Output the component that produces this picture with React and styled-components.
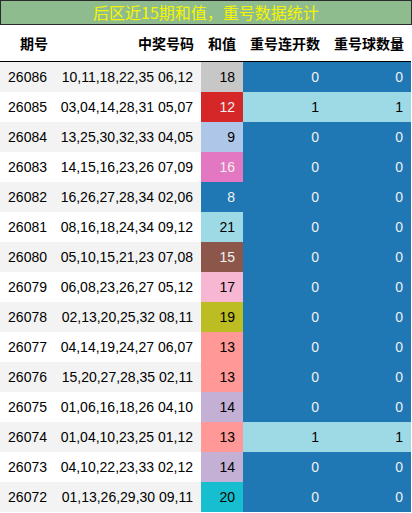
import React from "react";
import styled, { createGlobalStyle } from "styled-components";

const GlobalStyle = createGlobalStyle`
  body {
    margin: 0;
    background: #ffffff;
    font-family: "Liberation Sans", "Noto Sans CJK SC", sans-serif;
  }
`;

const rows = [
  ["26086", "10,11,18,22,35 06,12", 18, 0, 0],
  ["26085", "03,04,14,28,31 05,07", 12, 1, 1],
  ["26084", "13,25,30,32,33 04,05", 9, 0, 0],
  ["26083", "14,15,16,23,26 07,09", 16, 0, 0],
  ["26082", "16,26,27,28,34 02,06", 8, 0, 0],
  ["26081", "08,16,18,24,34 09,12", 21, 0, 0],
  ["26080", "05,10,15,21,23 07,08", 15, 0, 0],
  ["26079", "06,08,23,26,27 05,12", 17, 0, 0],
  ["26078", "02,13,20,25,32 08,11", 19, 0, 0],
  ["26077", "04,14,19,24,27 06,07", 13, 0, 0],
  ["26076", "15,20,27,28,35 02,11", 13, 0, 0],
  ["26075", "01,06,16,18,26 04,10", 14, 0, 0],
  ["26074", "01,04,10,23,25 01,12", 13, 1, 1],
  ["26073", "04,10,22,23,33 02,12", 14, 0, 0],
  ["26072", "01,13,26,29,30 09,11", 20, 0, 0],
];

// 和值 -> [背景, 文字]
const sumColors = {
  8: ["#1f77b4", "#f1f1f1"],
  9: ["#aec7e8", "#000000"],
  12: ["#d62728", "#f1f1f1"],
  13: ["#ff9896", "#000000"],
  14: ["#c5b0d5", "#000000"],
  15: ["#8c564b", "#f1f1f1"],
  16: ["#e377c2", "#f1f1f1"],
  17: ["#f7b6d2", "#000000"],
  18: ["#c7c7c7", "#000000"],
  19: ["#bcbd22", "#000000"],
  20: ["#17becf", "#000000"],
  21: ["#9edae5", "#000000"],
};

const repeatColors = {
  0: ["#1f77b4", "#f1f1f1"],
  1: ["#9edae5", "#000000"],
};

const App = () => {
  return (
    <Wrap>
      <GlobalStyle />
      <Title>后区近15期和值，重号数据统计</Title>
      <Table>
        <colgroup>
          <col style={{ width: 55 }} />
          <col style={{ width: 146 }} />
          <col style={{ width: 42 }} />
          <col style={{ width: 84 }} />
          <col style={{ width: 84 }} />
        </colgroup>
        <thead>
          <tr>
            <HeadCell>期号</HeadCell>
            <HeadCell>中奖号码</HeadCell>
            <HeadCell>和值</HeadCell>
            <HeadCell>重号连开数</HeadCell>
            <HeadCell>重号球数量</HeadCell>
          </tr>
        </thead>
        <tbody>
          {rows.map(([issue, nums, sum, lian, qiu], i) => (
            <Row key={issue} $odd={i % 2 === 0}>
              <Cell>{issue}</Cell>
              <Cell>{nums}</Cell>
              <ColorCell $bg={sumColors[sum][0]} $fg={sumColors[sum][1]}>
                {sum}
              </ColorCell>
              <ColorCell $bg={repeatColors[lian][0]} $fg={repeatColors[lian][1]}>
                {lian}
              </ColorCell>
              <ColorCell $bg={repeatColors[qiu][0]} $fg={repeatColors[qiu][1]}>
                {qiu}
              </ColorCell>
            </Row>
          ))}
        </tbody>
      </Table>
    </Wrap>
  );
};

export default App;

const Wrap = styled.div`
  width: 412px;
`;

const Title = styled.div`
  box-sizing: border-box;
  height: 25px;
  background: #8fbc8f;
  border: 1px solid #2b2b2b;
  color: #f5f500;
  font-family: "Noto Sans CJK SC", sans-serif;
  font-size: 16px;
  line-height: 22px;
  text-align: center;
`;

const Table = styled.table`
  width: 411px;
  table-layout: fixed;
  border-collapse: collapse;
  border-spacing: 0;
  font-size: 14px;
  color: #000000;
`;

const HeadCell = styled.th`
  height: 36px;
  padding: 0 7px 0 0;
  border-bottom: 1px solid #000000;
  text-align: right;
  font-family: "Noto Sans CJK SC", sans-serif;
  font-weight: 700;
  font-size: 14px;
  white-space: nowrap;
`;

const Row = styled.tr`
  background: ${(p) => (p.$odd ? "#f3f3f3" : "#ffffff")};
`;

const Cell = styled.td`
  height: 30px;
  padding: 0 8px 0 0;
  text-align: right;
  white-space: nowrap;
  font-family: "Liberation Sans", sans-serif;
`;

const ColorCell = styled(Cell)`
  background: ${(p) => p.$bg};
  color: ${(p) => p.$fg};
`;
